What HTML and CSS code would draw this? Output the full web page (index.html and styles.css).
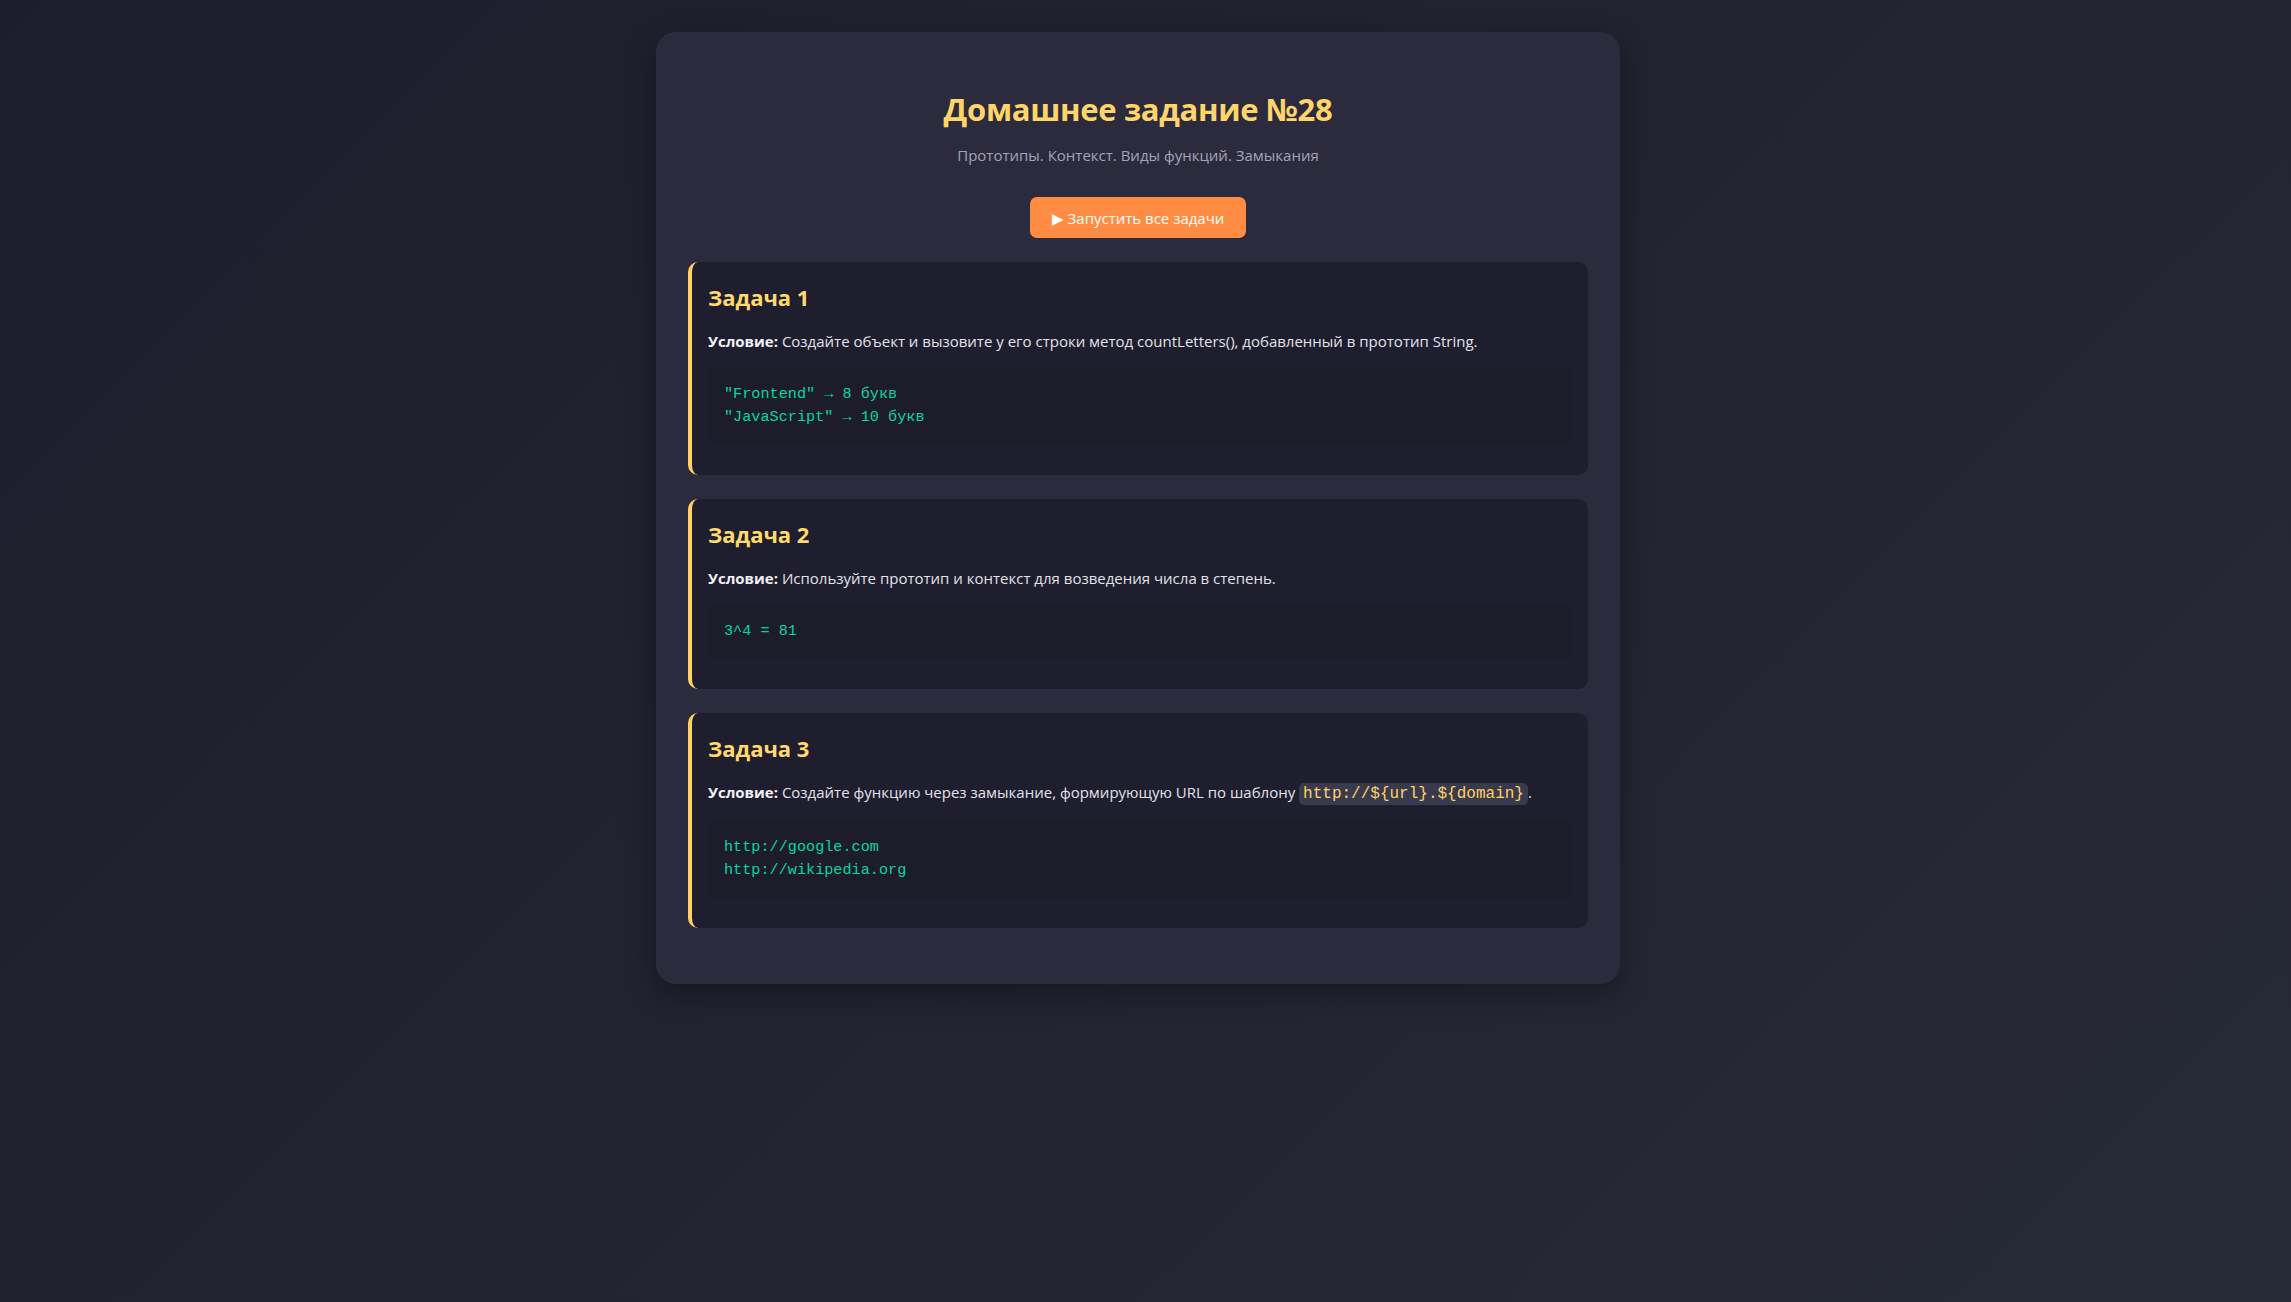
FILE: index.html
```html
<!DOCTYPE html>
<html lang="ru">
<head>
<meta charset="utf-8">
<title>Домашнее задание №28</title>
<link rel="stylesheet" href="styles.css">
</head>
<body>
<main class="container">
  <h1 class="title">Домашнее задание №28</h1>
  <p class="subtitle">Прототипы. Контекст. Виды функций. Замыкания</p>
  <div class="actions">
    <button class="run-btn" type="button">▶ Запустить все задачи</button>
  </div>

  <section class="task">
    <h2 class="task-title">Задача 1</h2>
    <p class="task-cond"><strong>Условие:</strong> Создайте объект и вызовите у его строки метод countLetters(), добавленный в прототип String.</p>
    <pre class="output">"Frontend" → 8 букв
"JavaScript" → 10 букв</pre>
  </section>

  <section class="task">
    <h2 class="task-title">Задача 2</h2>
    <p class="task-cond"><strong>Условие:</strong> Используйте прототип и контекст для возведения числа в степень.</p>
    <pre class="output">3^4 = 81</pre>
  </section>

  <section class="task">
    <h2 class="task-title">Задача 3</h2>
    <p class="task-cond"><strong>Условие:</strong> Создайте функцию через замыкание, формирующую URL по шаблону <code class="inline-code">http://${url}.${domain}</code>.</p>
    <pre class="output">http://google.com
http://wikipedia.org</pre>
  </section>
</main>
</body>
</html>
```

FILE: styles.css
```css
html {
  background: #1f1e2e;
}
body {
  margin: 0;
  padding: 32px 47px 32px 32px;
  min-height: 100vh;
  background: linear-gradient(135deg, #1e1d2d 0%, #232331 50%, #272b37 100%);
  font-family: "Open Sans", "Noto Sans", sans-serif;
  color: #e0e0e8;
}
.container {
  max-width: 900px;
  margin: 0 auto;
  padding: 32px 32px 56px;
  background: #2c2b3e;
  border-radius: 20px;
  box-shadow: 0 10px 30px rgba(0, 0, 0, 0.35);
}
.title {
  margin: 23px 0 0;
  font-size: 31px;
  line-height: 44px;
  font-weight: 700;
  text-align: center;
  color: #ffd56a;
  letter-spacing: -0.3px;
}
.subtitle {
  margin: 12px 0 0;
  font-size: 15px;
  line-height: 24px;
  text-align: center;
  color: #a3a3b8;
}
.actions {
  display: flex;
  justify-content: center;
  margin-top: 30px;
}
.run-btn {
  height: 41px;
  padding: 0 22px;
  border: none;
  border-radius: 7px;
  background: #ff8c42;
  color: #ffffff;
  font-family: "Open Sans", "Noto Sans", sans-serif;
  font-size: 15px;
  cursor: pointer;
}
.task {
  margin-top: 24px;
  padding: 20px 16px 30px;
  background: #1f1e2e;
  border-left: 4px solid #ffd166;
  border-radius: 10px;
}
.task-title {
  margin: 0;
  font-size: 22px;
  line-height: 30px;
  font-weight: 700;
  color: #ffd96b;
}
.task-cond {
  margin: 17px 0 0;
  font-size: 15px;
  line-height: 24px;
  color: #e2e2ea;
}
.task-cond strong {
  color: #f2f2f6;
}
.inline-code {
  font-family: "Liberation Mono", "Courier New", monospace;
  font-size: 16px;
  color: #ffd166;
  background: #3a3a4e;
  padding: 2px 4px;
  border-radius: 5px;
}
.output {
  margin: 14px 0 0;
  padding: 16px;
  background: #1d1c2b;
  border-radius: 8px;
  font-family: "Liberation Mono", "Courier New", monospace;
  font-size: 15.2px;
  line-height: 23px;
  color: #06d6a0;
  white-space: pre;
}
```
